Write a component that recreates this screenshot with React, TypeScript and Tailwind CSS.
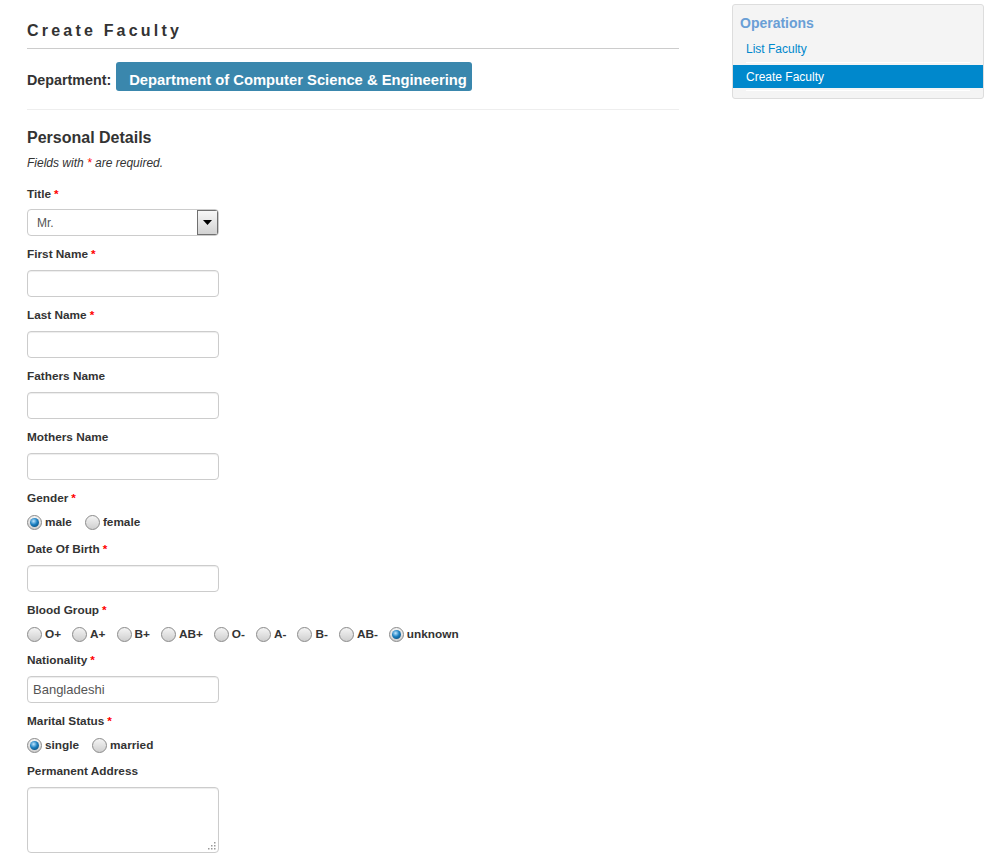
import React from "react";

const FONT = "font-['Liberation_Sans',Arial,sans-serif]";

function Req() {
  return <span className="ml-[3px] text-[#f00]">*</span>;
}

function Label({ text, required }: { text: string; required?: boolean }) {
  return (
    <div className="text-[11.8px] font-bold leading-[16px] text-[#333]">
      {text}
      {required && <Req />}
    </div>
  );
}

function TextInput({ value }: { value?: string }) {
  return (
    <div className="mt-2 flex h-[27px] w-[192px] items-center rounded-[4px] border border-[#ccc] bg-white px-[5px] text-[13px] text-[#555] shadow-[inset_0_1px_1px_rgba(0,0,0,0.075)]">
      {value}
    </div>
  );
}

function Radio({ checked }: { checked?: boolean }) {
  return (
    <span className="flex h-[15px] w-[15px] items-center justify-center rounded-full border border-[#8a8a8a] bg-[linear-gradient(#f4f4f4,#cfcfcf)]">
      {checked && (
        <span className="h-[9px] w-[9px] rounded-full bg-[radial-gradient(circle_at_40%_35%,#bfe6ff,#1b7fc0_45%,#063b63)]" />
      )}
    </span>
  );
}

function RadioGroup({ options, selected, gap = "gap-[11px]" }: { options: string[]; selected: string; gap?: string }) {
  return (
    <div className={`mt-2 flex h-[16px] items-center ${gap} text-[11.8px] font-bold text-[#333]`}>
      {options.map((o) => (
        <label key={o} className="flex items-center gap-[3px]">
          <Radio checked={o === selected} />
          <span>{o}</span>
        </label>
      ))}
    </div>
  );
}

export default function App() {
  return (
    <div className={`${FONT} flex min-h-[861px] bg-white text-[#333]`}>
      <div className="ml-[27px] w-[652px]">
        <h2 className="border-b border-[#ccc] pb-[7px] pt-[21px] text-[16px] font-bold leading-[20px] tracking-[3.2px] text-[#333]">
          Create Faculty
        </h2>

        <div className="mt-[13px] flex items-baseline gap-[5px]">
          <span className="text-[14.3px] font-bold">Department:</span>
          <span className="rounded-[3px] bg-[#3a87ad] pb-[2px] pl-[13px] pr-[5px] pt-[10px] text-[14.75px] font-bold leading-[17px] text-white">
            Department of Computer Science &amp; Engineering
          </span>
        </div>

        <div className="mt-[18px] border-t border-[#eee]" />

        <h3 className="mt-[18px] text-[16px] font-bold leading-[20px]">Personal Details</h3>
        <p className="mt-[7px] text-[12px] italic leading-[16px]">
          Fields with <span className="text-[#f00]">*</span> are required.
        </p>

        <div className="mt-[15px]">
          <Label text="Title" required />
          <div className="mt-[7px] flex h-[27px] w-[192px] overflow-hidden rounded-[4px] border border-[#ccc] bg-white">
            <div className="flex flex-1 items-center pl-[9px] text-[12px] text-[#555]">Mr.</div>
            <div className="flex w-[21px] items-center justify-center border border-[#707070] bg-[linear-gradient(#f7f7f7,#d2d2d2)]">
              <svg width="9" height="5" viewBox="0 0 9 5">
                <path d="M0 0h9L4.5 5z" fill="#000" />
              </svg>
            </div>
          </div>
        </div>

        <div className="mt-[10px]">
          <Label text="First Name" required />
          <TextInput />
        </div>
        <div className="mt-[10px]">
          <Label text="Last Name" required />
          <TextInput />
        </div>
        <div className="mt-[10px]">
          <Label text="Fathers Name" />
          <TextInput />
        </div>
        <div className="mt-[10px]">
          <Label text="Mothers Name" />
          <TextInput />
        </div>
        <div className="mt-[10px]">
          <Label text="Gender" required />
          <RadioGroup options={["male", "female"]} selected="male" gap="gap-[13px]" />
        </div>
        <div className="mt-[11px]">
          <Label text="Date Of Birth" required />
          <TextInput />
        </div>
        <div className="mt-[10px]">
          <Label text="Blood Group" required />
          <RadioGroup
            options={["O+", "A+", "B+", "AB+", "O-", "A-", "B-", "AB-", "unknown"]}
            selected="unknown"
          />
        </div>
        <div className="mt-[10px]">
          <Label text="Nationality" required />
          <TextInput value="Bangladeshi" />
        </div>
        <div className="mt-[10px]">
          <Label text="Marital Status" required />
          <RadioGroup options={["single", "married"]} selected="single" gap="gap-[13px]" />
        </div>
        <div className="mt-[10px]">
          <Label text="Permanent Address" />
          <div className="relative mt-2 h-[66px] w-[192px] rounded-[4px] border border-[#ccc] bg-white shadow-[inset_0_1px_1px_rgba(0,0,0,0.075)]">
            <svg className="absolute bottom-[2px] right-[2px]" width="10" height="10" viewBox="0 0 10 10">
              {[
                [8, 2], [8, 5], [8, 8], [5, 5], [5, 8], [2, 8],
              ].map(([x, y]) => (
                <rect key={`${x}-${y}`} x={x} y={y} width="1.5" height="1.5" fill="#999" />
              ))}
            </svg>
          </div>
        </div>
      </div>

      <div className="ml-[53px] mt-[4px] w-[252px] self-start">
        <div className="rounded-[3px] border border-[#ddd] bg-[#f4f4f4] pb-[7px] pt-[9px]">
          <div className="pl-[7px] text-[14px] font-bold leading-[18px] text-[#6a9fd6]">Operations</div>
          <div className="mt-[5px] flex h-[23px] items-center pl-[13px] text-[12px] text-[#0088cc]">List Faculty</div>
          <div className="mx-[13px] mt-[2px] h-px bg-white" />
          <div className="mt-[2px] flex h-[23px] items-center bg-[#0088cc] pl-[13px] text-[12px] text-white">
            Create Faculty
          </div>
          <div className="mx-[13px] mt-[2px] h-px bg-white" />
        </div>
      </div>
    </div>
  );
}
